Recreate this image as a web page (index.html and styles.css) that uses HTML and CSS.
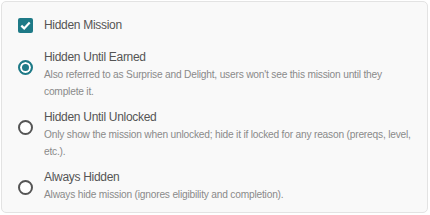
FILE: index.html
```html
<!doctype html>
<html lang="en">
<head>
<meta charset="UTF-8">
<title>Mission visibility</title>
<link rel="stylesheet" href="styles.css">
</head>
<body>
	<div class="panel">
		<!-- hidden toggle -->
		<div class="row check_row">
			<span class="ctl"><span class="checkbox"><svg width="11" height="9" viewBox="0 0 11 9"><path d="M1.3 4.6 L4.2 7.4 L9.7 1.6" fill="none" stroke="#fff" stroke-width="2.2"/></svg></span></span>
			<span class="title">Hidden Mission</span>
		</div>
		<!-- visibility options -->
		<div class="row opt">
			<span class="ctl"><span class="radio on"></span></span>
			<div class="txt">
				<div class="title">Hidden Until Earned</div>
				<div class="desc">Also referred to as Surprise and Delight, users won't see this mission until they complete it.</div>
			</div>
		</div>
		<div class="row opt">
			<span class="ctl"><span class="radio"></span></span>
			<div class="txt">
				<div class="title">Hidden Until Unlocked</div>
				<div class="desc">Only show the mission when unlocked; hide it if locked for any reason (prereqs, level, etc.).</div>
			</div>
		</div>
		<div class="row opt">
			<span class="ctl"><span class="radio"></span></span>
			<div class="txt">
				<div class="title">Always Hidden</div>
				<div class="desc">Always hide mission (ignores eligibility and completion).</div>
			</div>
		</div>
	</div>
</body>
</html>
```

FILE: styles.css
```css
body{
	margin:0; background:#ffffff;
	font-family:"Liberation Sans", Arial, sans-serif;
}
.panel{
	margin:1px; width:427px; height:212px; box-sizing:border-box;
	border:1px solid #e3e3e3; border-radius:5px;
	background-color:#f9f9f9;
	padding:15px 14px 0 16px;
}
.row{
	display:flex;
}
.ctl{
	width:26px; flex:none;
	display:flex; align-items:center;
}
.check_row{
	height:17px; align-items:center; margin-bottom:15px;
}
.checkbox{
	width:15px; height:15px; border-radius:2px;
	background-color:#1e7a87;
	display:flex; align-items:center; justify-content:center;
}
.radio{
	width:11px; height:11px; border-radius:50%;
	border:2px solid #555555; background:#ffffff;
	display:block;
}
.radio.on{
	border-color:#1e7a87;
	box-shadow:inset 0 0 0 2px #ffffff;
	background:#1e7a87;
}
.opt{
	margin-bottom:9px;
}
.opt .ctl{
	align-items:flex-start; padding-top:11px; height:17px;
}
.title{
	font-size:12px; letter-spacing:-0.3px;
	color:#555555; line-height:17px;
}
.desc{
	font-size:10.2px; letter-spacing:-0.2px;
	color:#8a8a8a; line-height:17px;
}
```
